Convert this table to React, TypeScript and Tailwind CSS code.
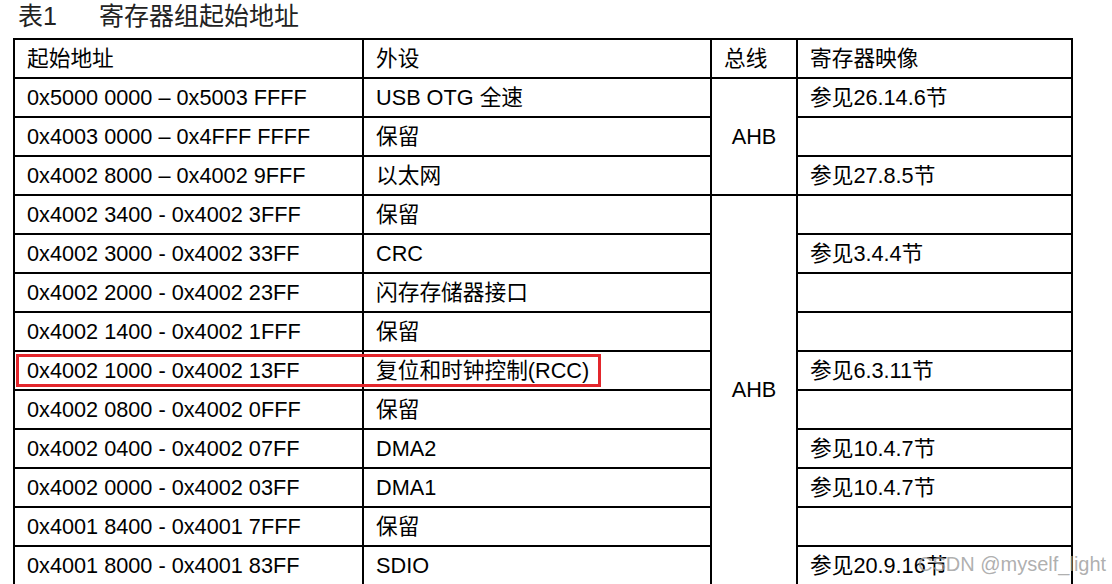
import React from "react";

type Row = { addr: string; periph: string; reg: string };

const group1: Row[] = [
  { addr: "0x5000 0000 – 0x5003 FFFF", periph: "USB OTG 全速", reg: "参见26.14.6节" },
  { addr: "0x4003 0000 – 0x4FFF FFFF", periph: "保留", reg: "" },
  { addr: "0x4002 8000 – 0x4002 9FFF", periph: "以太网", reg: "参见27.8.5节" },
];

const group2: Row[] = [
  { addr: "0x4002 3400 - 0x4002 3FFF", periph: "保留", reg: "" },
  { addr: "0x4002 3000 - 0x4002 33FF", periph: "CRC", reg: "参见3.4.4节" },
  { addr: "0x4002 2000 - 0x4002 23FF", periph: "闪存存储器接口", reg: "" },
  { addr: "0x4002 1400 - 0x4002 1FFF", periph: "保留", reg: "" },
  { addr: "0x4002 1000 - 0x4002 13FF", periph: "复位和时钟控制(RCC)", reg: "参见6.3.11节" },
  { addr: "0x4002 0800 - 0x4002 0FFF", periph: "保留", reg: "" },
  { addr: "0x4002 0400 - 0x4002 07FF", periph: "DMA2", reg: "参见10.4.7节" },
  { addr: "0x4002 0000 - 0x4002 03FF", periph: "DMA1", reg: "参见10.4.7节" },
  { addr: "0x4001 8400 - 0x4001 7FFF", periph: "保留", reg: "" },
  { addr: "0x4001 8000 - 0x4001 83FF", periph: "SDIO", reg: "参见20.9.16节" },
];

const cell = "border-2 border-black h-[39px] px-[12px] py-0 align-middle text-left";

function Cells({ r, bus, span, highlight }: { r: Row; bus?: boolean; span?: number; highlight?: boolean }) {
  return (
    <tr>
      <td className={cell}>
        <div className="relative">
          {highlight && (
            <div className="absolute left-[-11px] top-[-5px] w-[585px] h-[33px] border-[3px] border-[#e3262c] pointer-events-none" />
          )}
          <span className="relative">{r.addr}</span>
        </div>
      </td>
      <td className={cell}>{r.periph}</td>
      {bus && (
        <td rowSpan={span} className={cell + " text-center"} style={{ textAlign: "center" }}>
          AHB
        </td>
      )}
      <td className={cell}>{r.reg}</td>
    </tr>
  );
}

export default function App() {
  return (
    <div
      className="relative w-[1112px] h-[584px] overflow-hidden bg-white text-black"
      style={{ fontFamily: '"Liberation Sans", "Noto Sans CJK SC", sans-serif' }}
    >
      <div className="h-[38px] pl-[18px] pt-[1px] text-[25px] leading-[30px] text-[#222]">
        <span>表1</span>
        <span className="ml-[42px]">寄存器组起始地址</span>
      </div>
      <table className="ml-[13px] w-[1058px] table-fixed border-collapse text-[21.7px] leading-[24px]">
        <colgroup>
          <col className="w-[349px]" />
          <col className="w-[348px]" />
          <col className="w-[86px]" />
          <col className="w-[275px]" />
        </colgroup>
        <tbody>
          <tr>
            <td className={cell}>起始地址</td>
            <td className={cell}>外设</td>
            <td className={cell}>总线</td>
            <td className={cell}>寄存器映像</td>
          </tr>
          {group1.map((r, i) => (
            <Cells key={"a" + i} r={r} bus={i === 0} span={3} />
          ))}
          {group2.map((r, i) => (
            <Cells key={"b" + i} r={r} bus={i === 0} span={10} highlight={i === 4} />
          ))}
        </tbody>
      </table>
      <div className="absolute left-[918px] top-[552px] text-[20px] leading-[24px] text-[#9a9a9a]/80">
        CSDN @myself_light
      </div>
    </div>
  );
}
